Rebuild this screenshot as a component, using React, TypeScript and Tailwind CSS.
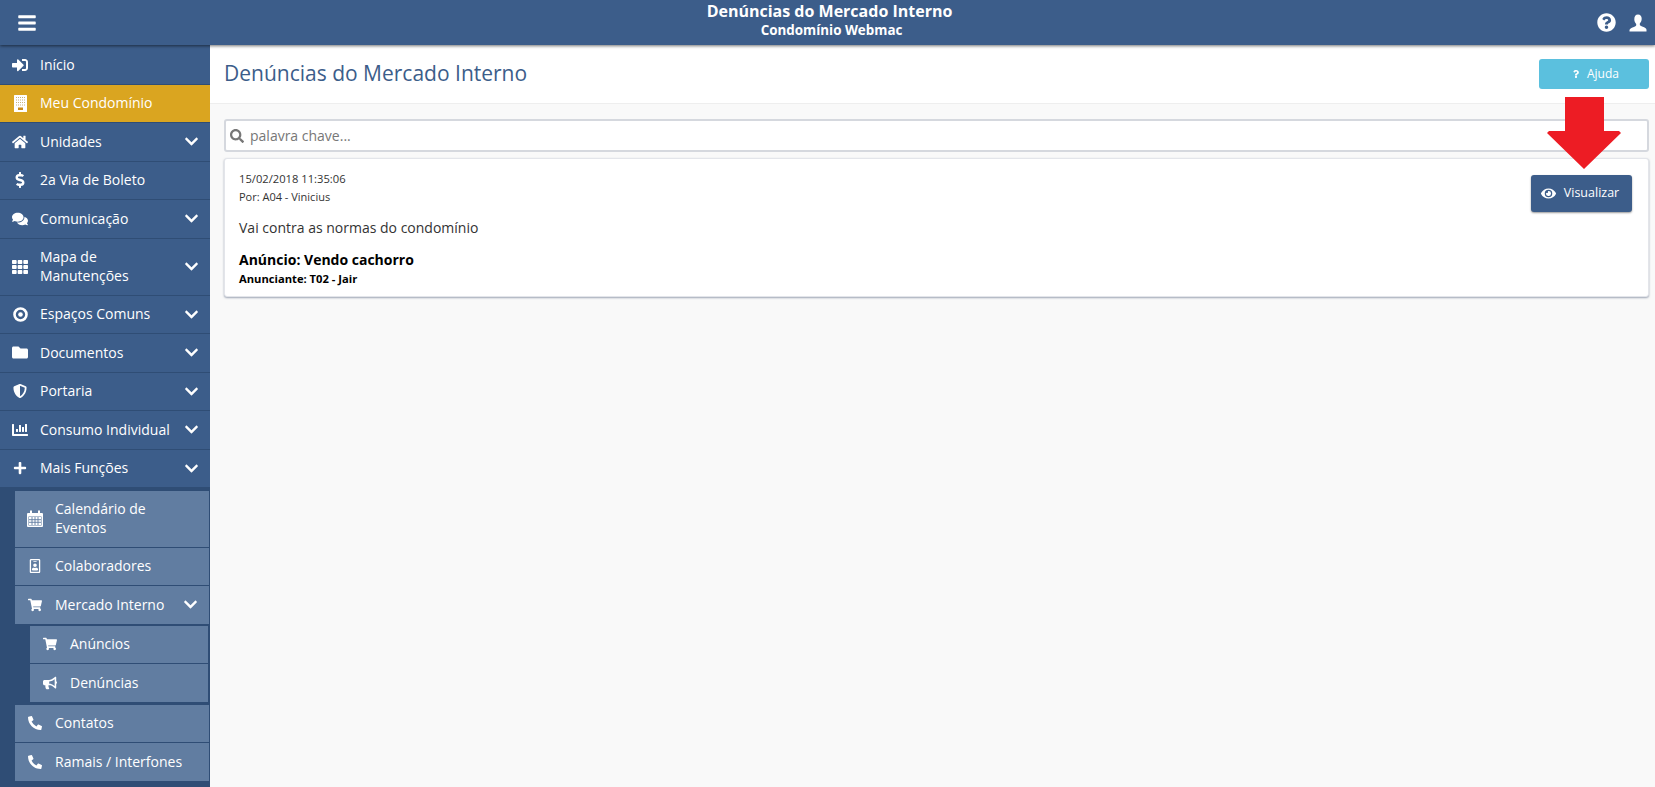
import type { ReactNode } from 'react'
import {
  FaBars, FaBullhorn, FaChartBar, FaChevronDown, FaComments, FaDollarSign,
  FaEye, FaFolder, FaHome, FaPhoneAlt, FaPlus, FaQuestion, FaQuestionCircle,
  FaRegIdBadge, FaSearch, FaShieldAlt, FaShoppingCart, FaSignInAlt, FaTh,
} from 'react-icons/fa'

const BuildingIcon = () => (
  <svg width="13" height="17" viewBox="0 0 13 17">
    <rect width="13" height="17" rx="0.5" fill="#ffffff" />
    <path d="M2 2.5h9M2 5h9M2 7.5h9M2 10h9" stroke="#c9b27a" strokeWidth="1" strokeDasharray="1 1" />
    <rect x="4" y="12.5" width="5" height="2.500" fill="#c98a1a" />
  </svg>
)

const CalendarIcon = () => (
  <svg width="16" height="17" viewBox="0 0 16 17" fill="none">
    <path d="M1 3h14a1 1 0 0 1 1 1v12a1 1 0 0 1-1 1H1a1 1 0 0 1-1-1V4a1 1 0 0 1 1-1Z" fill="#ffffff" />
    <path d="M3 0.5h2v4H3zM11 0.5h2v4h-2z" fill="#ffffff" />
    <path d="M1.500 6.500h13v9h-13z" fill="#617da1" />
    <path d="M2 7h12v8H2z" fill="#ffffff" />
    <path d="M5 7v8M8 7v8M11 7v8M2 9.700h12M2 12.300h12" stroke="#617da1" strokeWidth="0.9" />
  </svg>
)

const UserIcon = () => (
  <svg width="18" height="18" viewBox="0 0 18 18">
    <path d="M9 0.5c2.400 0 3.700 1.900 3.700 4.300 0 2.100-.9 3.700-1.900 4.700v1.300c0 .9 1.200 1.400 3 2 1.800.6 3.700 1.400 3.700 3v1.700H.5V16.300c0-1.600 1.900-2.400 3.700-3 1.800-.6 3-1.100 3-2V10c-1-1-1.900-2.600-1.900-4.700C5.300 2.400 6.600.5 9 .5Z" fill="#ffffff" />
  </svg>
)

const RingIcon = () => (
  <svg width="15" height="15" viewBox="0 0 15 15" fill="none">
    <circle cx="7.500" cy="7.500" r="6" stroke="#ffffff" strokeWidth="2.600" />
    <circle cx="7.500" cy="7.500" r="2.300" fill="#ffffff" />
  </svg>
)

const MenuRow = ({ icon, label, chevron, active }: { icon: ReactNode; label: ReactNode; chevron?: boolean; active?: boolean }) => (
  <div className={`flex items-center pl-3 pr-[11px] py-[9.5px] border-b border-[#2f4d75] text-white text-[14px] leading-[18.5px] ${active ? 'bg-[#daa520]' : 'bg-[#3c5d8a]'}`}>
    <span className="w-[16px] flex justify-center text-[16px] shrink-0">{icon}</span>
    <span className="ml-[12px] flex-1">{label}</span>
    {chevron && <FaChevronDown className="text-[15px] shrink-0" />}
  </div>
)

const SubRow = ({ icon, label, chevron, flat }: { icon: ReactNode; label: ReactNode; chevron?: boolean; flat?: boolean }) => (
  <div className={`flex items-center pl-3 pr-[11px] py-[9.5px] text-white text-[14px] leading-[18.5px] bg-[#617da1] ${flat ? '' : 'border-b border-[#2f4d75]'}`}>
    <span className="w-[16px] flex justify-center text-[14px] shrink-0">{icon}</span>
    <span className="ml-[12px] flex-1">{label}</span>
    {chevron && <FaChevronDown className="text-[15px] shrink-0" />}
  </div>
)

const Sidebar = () => (
  <aside className="w-[210px] shrink-0 bg-[#2f4d75] border-t border-[#3c5d8a]">
    <MenuRow icon={<FaSignInAlt />} label="Início" />
    <MenuRow icon={<BuildingIcon />} label="Meu Condomínio" active />
    <MenuRow icon={<FaHome />} label="Unidades" chevron />
    <MenuRow icon={<FaDollarSign />} label="2a Via de Boleto" />
    <MenuRow icon={<FaComments className="text-[18px]" />} label="Comunicação" chevron />
    <MenuRow icon={<FaTh className="text-[18px]" />} label={<>Mapa de<br />Manutenções</>} chevron />
    <MenuRow icon={<RingIcon />} label="Espaços Comuns" chevron />
    <MenuRow icon={<FaFolder className="text-[17px]" />} label="Documentos" chevron />
    <MenuRow icon={<FaShieldAlt className="text-[14px]" />} label="Portaria" chevron />
    <MenuRow icon={<FaChartBar className="text-[18px]" />} label="Consumo Individual" chevron />
    <MenuRow icon={<FaPlus className="text-[14px]" />} label="Mais Funções" chevron />
    <div className="pl-[15px] pt-[2.5px] pb-[6px] border-r border-[#2f4d75]">
      <SubRow icon={<CalendarIcon />} label={<>Calendário de<br />Eventos</>} />
      <SubRow icon={<FaRegIdBadge />} label="Colaboradores" />
      <SubRow icon={<FaShoppingCart />} label="Mercado Interno" chevron flat />
      <div className="pl-[15px] pr-px pt-[2px] pb-[3px]">
        <SubRow icon={<FaShoppingCart />} label="Anúncios" />
        <SubRow icon={<FaBullhorn />} label="Denúncias" flat />
      </div>
      <SubRow icon={<FaPhoneAlt />} label="Contatos" />
      <SubRow icon={<FaPhoneAlt />} label="Ramais / Interfones" />
    </div>
  </aside>
)

export default function App() {
  return (
    <div className="relative h-[787px] overflow-hidden flex flex-col bg-[#f9f9f9] font-['Open_Sans',sans-serif]">
      <header className="h-[45px] shrink-0 bg-[#3c5d8a] flex items-center justify-between pl-[17px] pr-[3px] shadow-[0_1px_3px_rgba(0,0,0,0.55)] relative z-10">
        <FaBars className="text-white text-[20px]" />
        <div className="absolute inset-x-0 top-[1px] pl-[4px] text-center text-white">
          <div className="text-[16px] font-bold leading-[20px]">Denúncias do Mercado Interno</div>
          <div className="pl-[4px] text-[13.400px] font-bold leading-[18px]">Condomínio Webmac</div>
        </div>
        <div className="flex items-center gap-[13px] pr-[5px] text-white text-[19px]">
          <FaQuestionCircle />
          <UserIcon />
        </div>
      </header>
      <div className="flex flex-1 min-h-0">
        <Sidebar />
        <main className="flex-1 min-w-0">
          <div className="h-[59px] bg-white border-b border-[#eeeeee] flex items-start justify-between pl-[14px] pr-[6px] pt-[14px]">
            <h1 className="text-[21px] leading-[28px] text-[#3c5d8a]">Denúncias do Mercado Interno</h1>
            <button className="w-[110px] h-[30px] pl-[3px] bg-[#5bc0de] rounded-[3px] text-white text-[12px] flex items-center justify-center gap-[7px]">
              <FaQuestion className="text-[8px]" /> Ajuda
            </button>
          </div>
          <div className="pl-[14px] pr-[6px] pt-[15px]">
            <div className="h-[33px] bg-white border-2 border-[#d5d8de] rounded-[3px] flex items-center pl-[4px] text-[14px] text-[#777777]">
              <FaSearch className="text-[#777777] text-[14px]" />
              <span className="ml-[6px]">palavra chave...</span>
            </div>
            <div className="mt-[6px] h-[139px] bg-white rounded-[3px] border border-[#e3e5ea] shadow-[0_1px_2px_rgba(70,85,115,0.5)] pl-[14px] pr-[16px] pt-[11px] flex justify-between items-start">
              <div>
                <div className="text-[11.200px] leading-[18px] text-[#333333]">15/02/2018 11:35:06</div>
                <div className="text-[11px] leading-[18px] text-[#333333]">Por: A04 - Vinicius</div>
                <div className="mt-[12px] text-[14px] leading-[20px] text-[#333333]">Vai contra as normas do condomínio</div>
                <div className="mt-[12px] text-[14px] leading-[20px] font-bold text-black">Anúncio: Vendo cachorro</div>
                <div className="text-[11.200px] leading-[18px] font-bold text-black">Anunciante: T02 - Jair</div>
              </div>
              <button className="mt-[5px] w-[101px] h-[37px] pr-[3px] bg-[#3c5d8a] rounded-[3px] text-white text-[12.500px] flex items-center justify-center gap-[8px] shadow-[0_1px_2px_rgba(0,0,0,0.4)]">
                <FaEye className="text-[15px]" /> Visualizar
              </button>
            </div>
          </div>
        </main>
      </div>
      <svg className="absolute left-[1547px] top-[97px] z-20" width="74" height="72" viewBox="0 0 74 72">
        <path d="M18 0H57V34H72L74 36L37 72L0 36L2 34H18Z" fill="#ed1c24" />
      </svg>
    </div>
  )
}
